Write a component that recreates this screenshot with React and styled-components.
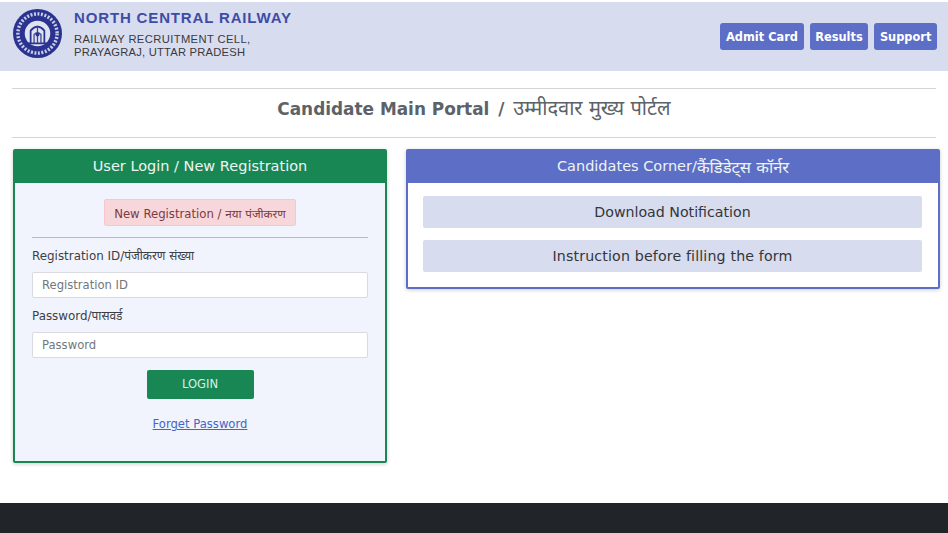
import React from 'react';
import styled, { createGlobalStyle } from 'styled-components';

const GlobalStyle = createGlobalStyle`
  html, body {
    margin: 0;
    padding: 0;
    background: #fff;
    font-family: "DejaVu Sans", "Noto Sans", sans-serif;
    color: #333;
  }
  * { box-sizing: border-box; }
`;

const Page = styled.div`
  width: 948px;
  height: 533px;
  overflow: hidden;
  display: flex;
  flex-direction: column;
  padding-top: 2px;
`;

const TopBar = styled.header`
  height: 69px;
  background: #d8dcef;
  display: flex;
  align-items: center;
  justify-content: space-between;
  padding: 0 11px 0 13px;
`;

const Brand = styled.div`
  display: flex;
  align-items: center;
  gap: 12px;
  svg { margin-top: -6px; }
`;

const BrandText = styled.div`
  display: flex;
  flex-direction: column;
  margin-top: -3px;
`;

const BrandName = styled.div`
  font-family: "Liberation Sans", Arial, sans-serif;
  font-size: 15px;
  font-weight: 700;
  letter-spacing: 0.85px;
  color: #3f4ca6;
  line-height: 18px;
  margin: -2px 0 6px;
`;

const BrandSub = styled.div`
  font-family: "Liberation Sans", Arial, sans-serif;
  font-size: 11.2px;
  letter-spacing: ${(p) => p.$spread}px;
  color: #3a3a40;
  line-height: 13.5px;
`;

const Nav = styled.nav`
  display: flex;
  gap: 6px;
`;

const NavButton = styled.a`
  height: 27px;
  padding: 0 5.6px;
  display: flex;
  align-items: center;
  background: #5c6ec6;
  border-radius: 3px;
  color: #fff;
  font-size: 11.4px;
  font-weight: 700;
`;

const TitleBand = styled.div`
  margin: 17px 12px 0;
  height: 50px;
  border-top: 1px solid #d5d5d5;
  border-bottom: 1px solid #d5d5d5;
  display: flex;
  align-items: center;
  justify-content: center;
`;

const PageTitle = styled.h1`
  margin: 0 0 11px;
  font-size: 16.9px;
  font-weight: 700;
  color: #5b6268;
  white-space: pre;
  b { margin-left: 3px; }
  span { margin-left: 3px; font-weight: 400; font-size: 20px; }
`;

const Columns = styled.main`
  display: flex;
  align-items: flex-start;
  gap: 19px;
  padding: 11px 8px 0 13px;
`;

const Card = styled.section`
  width: ${(p) => p.$width}px;
  height: ${(p) => p.$height}px;
  border: 2px solid ${(p) => p.$tone};
  border-radius: 2px;
  background: ${(p) => p.$fill};
  box-shadow: 0 1px 4px rgba(0, 0, 0, 0.2);
  display: flex;
  flex-direction: column;
`;

const CardHead = styled.h2`
  margin: 0;
  height: 32px;
  padding-bottom: 2px;
  flex: none;
  background: ${(p) => p.$tone};
  color: #eef4f4;
  font-size: 14.5px;
  font-weight: 400;
  display: flex;
  align-items: center;
  justify-content: center;
  white-space: pre;
  span { font-size: 16.5px; }
`;

const LoginBody = styled.form`
  padding: 16px 17px 0;
  display: flex;
  flex-direction: column;
`;

const NewReg = styled.a`
  align-self: center;
  height: 27px;
  width: 192px;
  background: #f8d7da;
  border: 1px solid #f5c6cb;
  border-radius: 2px;
  color: #7a3a44;
  font-size: 11.7px;
  display: flex;
  align-items: center;
  justify-content: center;
  white-space: pre;
`;

const Rule = styled.hr`
  width: 100%;
  margin: 11px 0 10px;
  border: 0;
  border-top: 1px solid #b9b9bd;
`;

const FieldLabel = styled.label`
  font-size: 11.9px;
  color: #3c4044;
  line-height: 17px;
  margin-bottom: 7px;
`;

const TextField = styled.input`
  height: 26px;
  width: 100%;
  padding: 0 9px;
  margin-bottom: 10px;
  background: #fff;
  border: 1px solid #d9dbe0;
  border-radius: 2px;
  font: 11.6px "DejaVu Sans", sans-serif;
  &::placeholder { color: #72777c; opacity: 1; }
`;

const LoginButton = styled.button`
  align-self: center;
  width: 107px;
  height: 29px;
  margin-top: 2px;
  padding: 0 0 2px;
  border: 0;
  border-radius: 2px;
  background: #198754;
  color: #d9f0e4;
  font: 11.6px "DejaVu Sans", sans-serif;
`;

const ForgetLink = styled.a`
  align-self: center;
  margin-top: 18px;
  font-size: 11.6px;
  color: #4466c4;
  text-decoration: underline;
`;

const CornerBody = styled.div`
  padding: 13px 16px 0 15px;
  display: flex;
  flex-direction: column;
  gap: 12px;
`;

const CornerLink = styled.a`
  height: 32px;
  background: #d8dcef;
  border-radius: 2px;
  color: #33363a;
  font-size: 14.2px;
  letter-spacing: ${(p) => p.$spread || 0}px;
  display: flex;
  align-items: center;
  justify-content: center;
`;

const Footer = styled.footer`
  margin-top: auto;
  height: 30px;
  background: #212529;
`;

// rough railway emblem
const Emblem = () => (
  <svg width="49" height="49" viewBox="0 0 50 50" aria-hidden="true">
    <circle cx="25" cy="25" r="25" fill="#2b3390" />
    <circle cx="25" cy="25" r="20" fill="none" stroke="#c9cde8" strokeWidth="3.5" strokeDasharray="2 1.6" />
    <circle cx="25" cy="25" r="15" fill="#2b3390" />
    <circle cx="25" cy="25" r="13" fill="#dfe2f0" />
    <path d="M15 35h20M18 35V22q7-8 14 0v13" fill="none" stroke="#2b3390" strokeWidth="1.8" />
    <path d="M21.500 35v-9q3.500-3.500 7 0v9M25 17v18" fill="none" stroke="#3d4598" strokeWidth="1.3" />
    <circle cx="25" cy="26" r="2" fill="#2b3390" />
  </svg>
);

export default function App() {
  return (
    <>
      <GlobalStyle />
      <Page>
        <TopBar>
          <Brand>
            <Emblem />
            <BrandText>
              <BrandName>NORTH CENTRAL RAILWAY</BrandName>
              <BrandSub $spread={0.4}>RAILWAY RECRUITMENT CELL,</BrandSub>
              <BrandSub $spread={0.22}>PRAYAGRAJ, UTTAR PRADESH</BrandSub>
            </BrandText>
          </Brand>
          <Nav>
            <NavButton>Admit Card</NavButton>
            <NavButton>Results</NavButton>
            <NavButton>Support</NavButton>
          </Nav>
        </TopBar>

        <TitleBand>
          <PageTitle>Candidate Main Portal <b>/</b> <span>उम्मीदवार मुख्य पोर्टल</span></PageTitle>
        </TitleBand>

        <Columns>
          <Card $width={374} $height={314} $tone="#198754" $fill="#f2f4fd">
            <CardHead $tone="#198754">User Login / New Registration</CardHead>
            <LoginBody>
              <NewReg>New Registration / नया पंजीकरण</NewReg>
              <Rule />
              <FieldLabel>Registration ID/पंजीकरण संख्या</FieldLabel>
              <TextField placeholder="Registration ID" />
              <FieldLabel>Password/पासवर्ड</FieldLabel>
              <TextField placeholder="Password" />
              <LoginButton type="button">LOGIN</LoginButton>
              <ForgetLink>Forget Password</ForgetLink>
            </LoginBody>
          </Card>

          <Card $width={534} $height={140} $tone="#5c6ec6" $fill="#fff">
            <CardHead $tone="#5c6ec6">Candidates Corner/<span>कैंडिडेट्स कॉर्नर</span></CardHead>
            <CornerBody>
              <CornerLink>Download Notification</CornerLink>
              <CornerLink $spread={0.15}>Instruction before filling the form</CornerLink>
            </CornerBody>
          </Card>
        </Columns>

        <Footer />
      </Page>
    </>
  );
}
